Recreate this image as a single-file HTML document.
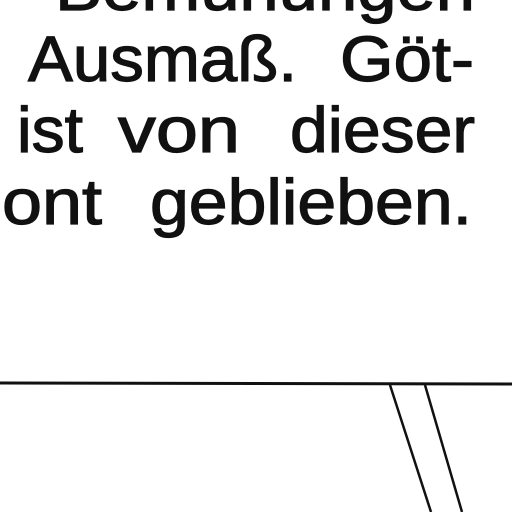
<!DOCTYPE html>
<html><head><meta charset="utf-8"><style>
html,body{margin:0;padding:0;background:#fff;}
body{width:512px;height:512px;overflow:hidden;}
</style></head><body>
<svg width="512" height="512" style="position:absolute;left:0;top:0" font-family="Liberation Sans, Arial, sans-serif" font-size="64" fill="#111">
<g stroke="#111" stroke-width="1.2">
<text x="55" y="10" textLength="420" lengthAdjust="spacingAndGlyphs">Bemühungen</text>
<text x="28" y="81" textLength="269" lengthAdjust="spacingAndGlyphs">Ausmaß.</text>
<text x="340" y="81" textLength="134" lengthAdjust="spacingAndGlyphs">Göt-</text>
<text x="17" y="152" textLength="66" lengthAdjust="spacingAndGlyphs">ist</text>
<text x="118" y="152" textLength="122" lengthAdjust="spacingAndGlyphs">von</text>
<text x="290" y="152" textLength="185" lengthAdjust="spacingAndGlyphs">dieser</text>
<text x="2" y="224" textLength="100" lengthAdjust="spacingAndGlyphs">ont</text>
<text x="150" y="224" textLength="322" lengthAdjust="spacingAndGlyphs">geblieben.</text>
</g>
<line x1="0" y1="383" x2="512" y2="384" stroke="#111" stroke-width="3"/>
<line x1="390" y1="385" x2="431" y2="512" stroke="#111" stroke-width="2.5"/>
<line x1="425" y1="385" x2="462" y2="512" stroke="#111" stroke-width="2.5"/>
</svg>
</body></html>
